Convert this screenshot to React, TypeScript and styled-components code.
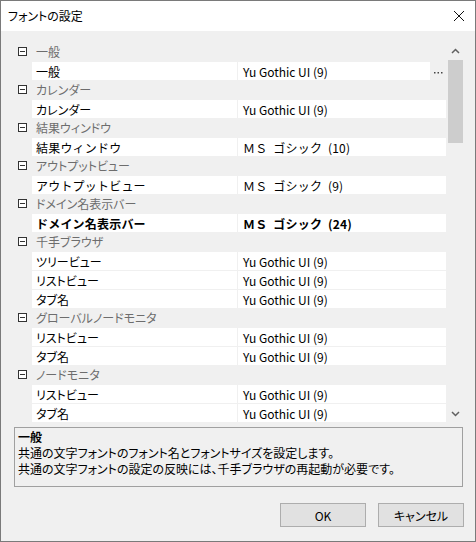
import React from "react";
import styled, { createGlobalStyle, css } from "styled-components";

const GlobalStyle = createGlobalStyle`
  html, body {
    margin: 0;
    padding: 0;
    background: #ffffff;
  }
  body {
    font-family: "Noto Sans CJK JP", "Noto Sans", sans-serif;
    font-size: 12px;
    color: #000;
  }
  * {
    box-sizing: border-box;
  }
`;

const Window = styled.div`
  width: 476px;
  height: 542px;
  border: 1px solid #7a7a7a;
  display: flex;
  flex-direction: column;
  background: #f0f0f0;
`;

const TitleBar = styled.div`
  height: 30px;
  flex: none;
  background: #ffffff;
  display: flex;
  align-items: center;
  justify-content: space-between;
  padding: 0 8px 0 7px;
`;

const Title = styled.span`
  font-size: 12px;
  font-feature-settings: "palt";
  line-height: 1;
`;

const CloseBtn = styled.div`
  width: 12px;
  height: 12px;
  display: flex;
  margin-right: 2px;
`;

const Client = styled.div`
  flex: 1;
  display: flex;
  flex-direction: column;
  padding: 11px 11px 0 13px;
`;

const Grid = styled.div`
  height: 380px;
  display: flex;
`;

const Rows = styled.div`
  flex: 1;
  overflow: hidden;
`;

const CatRow = styled.div`
  height: 19px;
  display: flex;
  align-items: center;
  padding-left: 4px;
  color: #6d6d6d;
  font-feature-settings: "palt";
`;

const Toggle = styled.svg`
  width: 9px;
  height: 9px;
  flex: none;
  margin-right: 9px;
`;

const PropRow = styled.div`
  height: 19px;
  display: flex;
  padding: 1px 1px 0 18px;
  gap: 1px;
`;

const Cell = styled.div<{ $mono?: boolean; $bold?: boolean }>`
  height: 18px;
  background: #ffffff;
  display: flex;
  align-items: center;
  white-space: pre;
  overflow: hidden;
  font-feature-settings: "palt";
  ${(p) =>
    p.$mono &&
    css`
      font-feature-settings: normal;
      letter-spacing: 0.2px;
      word-spacing: 3px;
    `}
  ${(p) =>
    p.$bold &&
    css`
      font-weight: 700;
    `}
`;

const NameCell = styled(Cell)`
  width: 205px;
  flex: none;
  padding-left: 4px;
`;

const ValueCell = styled(Cell)`
  flex: 1;
  padding-left: 5px;
`;

const DotsBtn = styled.div`
  width: 15px;
  flex: none;
  height: 18px;
  display: flex;
  align-items: center;
  justify-content: center;
  padding-top: 2px;
`;

const ScrollBar = styled.div`
  width: 17px;
  flex: none;
  display: flex;
  flex-direction: column;
  background: #f0f0f0;
`;

const ScrollArrow = styled.div`
  height: 17px;
  flex: none;
  display: flex;
  align-items: center;
  justify-content: center;
`;

const Thumb = styled.div`
  height: 83px;
  margin: 1px 1px 0 1px;
  background: #cdcdcd;
`;

const Spacer = styled.div`
  flex: 1;
`;

const Description = styled.div`
  margin-top: 5px;
  margin-right: 1px;
  height: 60px;
  border: 1px solid #a0a0a0;
  padding: 1px 3px;
  line-height: 16px;
  font-feature-settings: "palt";
`;

const DescTitle = styled.div`
  font-weight: 700;
`;

const ButtonRow = styled.div`
  display: flex;
  justify-content: flex-end;
  gap: 12px;
  margin-top: 16px;
`;

const Button = styled.button`
  width: 86px;
  height: 24px;
  background: #e1e1e1;
  border: 1px solid #adadad;
  font-family: "Noto Sans CJK JP", "Noto Sans", sans-serif;
  font-size: 12px;
  font-feature-settings: "palt";
  color: #000;
  padding: 0;
`;

type Prop = {
  name: string;
  value: string;
  mono?: boolean;
  bold?: boolean;
  selected?: boolean;
};

type Category = { name: string; items: Prop[] };

const YU = "Yu Gothic UI (9)";

const categories: Category[] = [
  { name: "一般", items: [{ name: "一般", value: YU, selected: true }] },
  { name: "カレンダー", items: [{ name: "カレンダー", value: YU }] },
  {
    name: "結果ウィンドウ",
    items: [{ name: "結果ウィンドウ", value: "ＭＳ ゴシック (10)", mono: true }],
  },
  {
    name: "アウトプットビュー",
    items: [{ name: "アウトプットビュー", value: "ＭＳ ゴシック (9)", mono: true }],
  },
  {
    name: "ドメイン名表示バー",
    items: [
      { name: "ドメイン名表示バー", value: "ＭＳ ゴシック (24)", mono: true, bold: true },
    ],
  },
  {
    name: "千手ブラウザ",
    items: [
      { name: "ツリービュー", value: YU },
      { name: "リストビュー", value: YU },
      { name: "タブ名", value: YU },
    ],
  },
  {
    name: "グローバルノードモニタ",
    items: [
      { name: "リストビュー", value: YU },
      { name: "タブ名", value: YU },
    ],
  },
  {
    name: "ノードモニタ",
    items: [
      { name: "リストビュー", value: YU },
      { name: "タブ名", value: YU },
    ],
  },
];

function MinusBox() {
  return (
    <Toggle viewBox="0 0 9 9">
      <rect x="0.5" y="0.5" width="8" height="8" fill="#fff" stroke="#333" />
      <line x1="2" y1="4.5" x2="7" y2="4.5" stroke="#333" />
    </Toggle>
  );
}

function Chevron({ up }: { up?: boolean }) {
  return (
    <svg width="9" height="6" viewBox="0 0 9 6">
      <polyline
        points={up ? "1,5 4.5,1.5 8,5" : "1,1 4.5,4.5 8,1"}
        fill="none"
        stroke="#606060"
        strokeWidth="1.5"
      />
    </svg>
  );
}

export default function App() {
  return (
    <>
      <GlobalStyle />
      <Window>
        <TitleBar>
          <Title>フォントの設定</Title>
          <CloseBtn>
            <svg width="12" height="12" viewBox="0 0 12 12">
              <path d="M1 1 L11 11 M11 1 L1 11" stroke="#111" strokeWidth="1" />
            </svg>
          </CloseBtn>
        </TitleBar>
        <Client>
          <Grid>
            <Rows>
              {categories.map((c, ci) => (
                <React.Fragment key={ci}>
                  <CatRow>
                    <MinusBox />
                    {c.name}
                  </CatRow>
                  {c.items.map((p, pi) => (
                    <PropRow key={pi}>
                      <NameCell $mono={p.mono} $bold={p.bold}>
                        {p.name}
                      </NameCell>
                      <ValueCell $mono={p.mono} $bold={p.bold}>
                        {p.value}
                      </ValueCell>
                      {p.selected && (
                        <DotsBtn>
                          <svg width="9" height="3" viewBox="0 0 9 3">
                            <rect x="0" y="1" width="1.5" height="1.5" fill="#444" />
                            <rect x="3.5" y="1" width="1.5" height="1.5" fill="#444" />
                            <rect x="7" y="1" width="1.5" height="1.5" fill="#444" />
                          </svg>
                        </DotsBtn>
                      )}
                    </PropRow>
                  ))}
                </React.Fragment>
              ))}
            </Rows>
            <ScrollBar>
              <ScrollArrow>
                <Chevron up />
              </ScrollArrow>
              <Thumb />
              <Spacer />
              <ScrollArrow>
                <Chevron />
              </ScrollArrow>
            </ScrollBar>
          </Grid>
          <Description>
            <DescTitle>一般</DescTitle>
            <div>共通の文字フォントのフォント名とフォントサイズを設定します。</div>
            <div>共通の文字フォントの設定の反映には、千手ブラウザの再起動が必要です。</div>
          </Description>
          <ButtonRow>
            <Button>OK</Button>
            <Button>キャンセル</Button>
          </ButtonRow>
        </Client>
      </Window>
    </>
  );
}
